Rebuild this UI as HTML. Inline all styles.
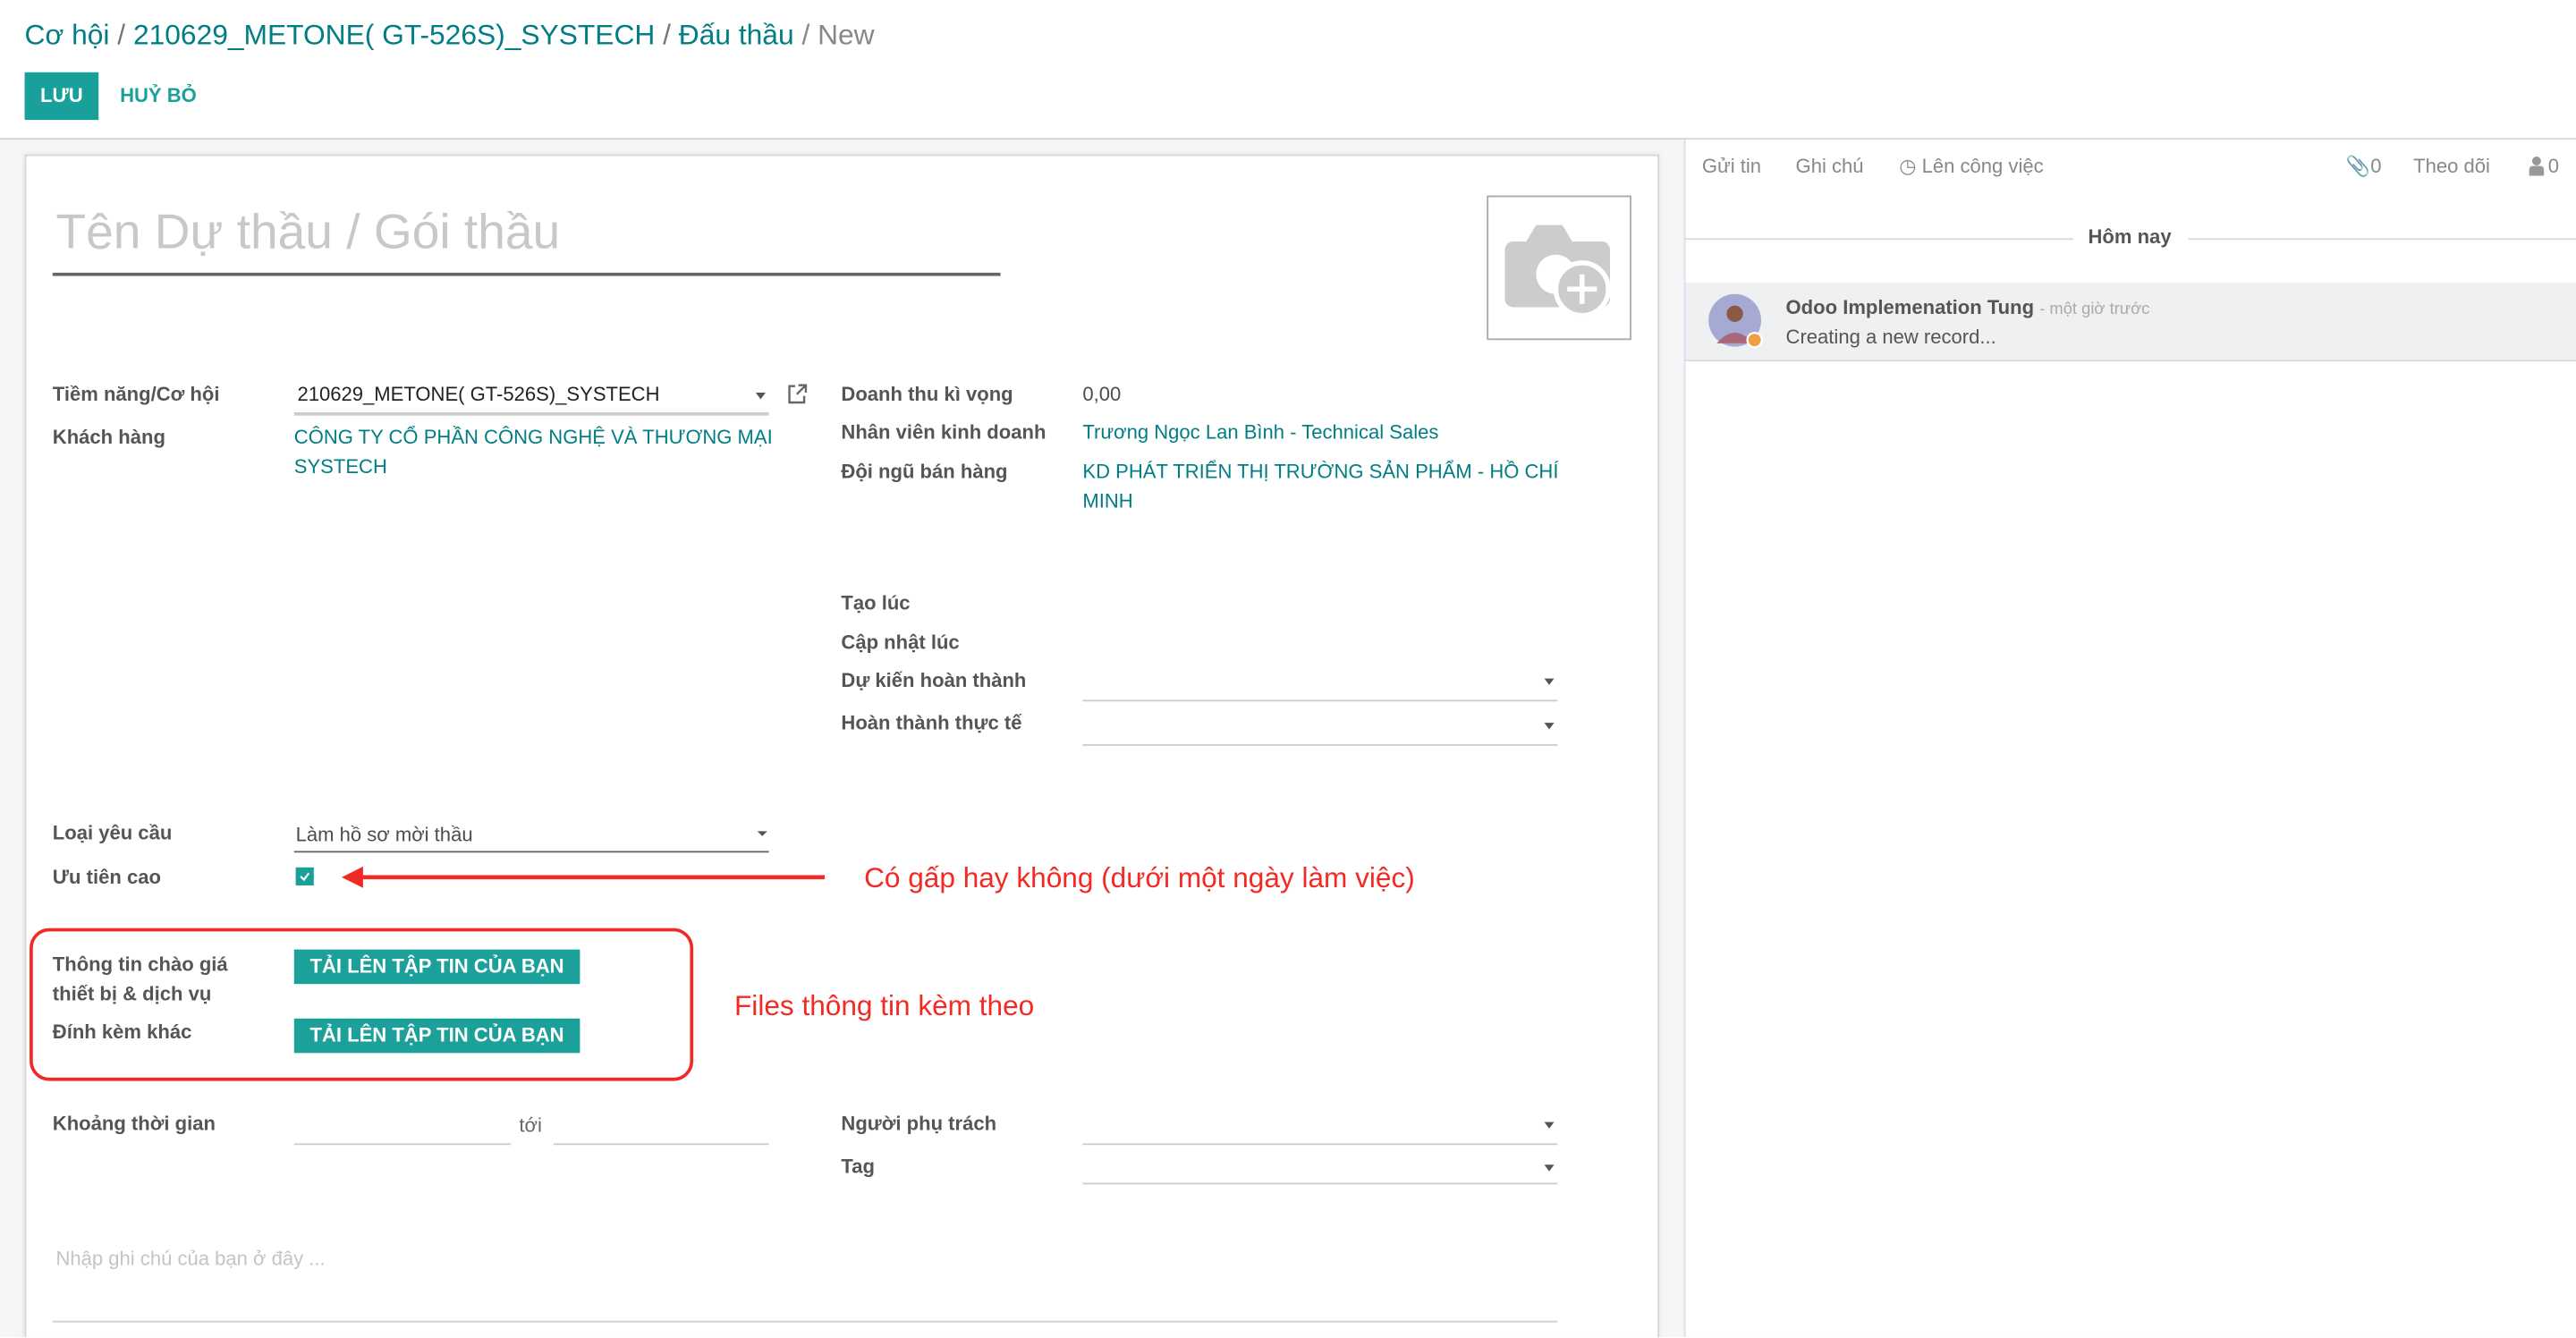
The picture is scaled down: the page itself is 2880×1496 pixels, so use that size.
<!DOCTYPE html>
<html><head><meta charset="utf-8">
<style>
html,body{margin:0;padding:0;width:2880px;height:1496px;overflow:hidden;background:#fff}
#w{position:absolute;left:0;top:0;width:1568px;height:814px;transform:scale(1.836735);transform-origin:0 0;font-family:"Liberation Sans",sans-serif;font-size:12px;color:#4c4c4c;overflow:hidden}
.a{position:absolute;white-space:nowrap}
.l{font-weight:bold;color:#555;font-size:12px}
.t{color:#017e84}
.u{position:absolute;height:1px;background:#ccc}
.c{position:absolute;width:0;height:0;border-left:3.5px solid transparent;border-right:3.5px solid transparent;border-top:4px solid #555}
.btn{position:absolute;background:#1ba199;color:#fff;font-weight:bold;font-size:12px;text-align:center;line-height:20px}
</style></head><body><div id="w">
<div class="a" style="left:15px;top:11px;font-size:17.3px;color:#017e84">Cơ hội <span style="color:#777">/</span> 210629_METONE( GT-526S)_SYSTECH <span style="color:#777">/</span> Đấu thầu <span style="color:#888">/ New</span></div>
<div class="btn" style="left:15px;top:44px;width:45px;height:29px;line-height:29px;background:#1aa09a">LƯU</div>
<div class="a" style="left:73px;top:51px;color:#1aa09a;font-weight:bold;font-size:12px">HUỶ BỎ</div>
<div style="position:absolute;left:0;top:84px;width:1568px;height:730px;background:#f6f6f6;border-top:1px solid #d4d4d4"></div>
<div style="position:absolute;left:15px;top:94px;width:993px;height:722px;background:#fff;border:1px solid #d3d6db;border-bottom:none;box-shadow:0 0 4px rgba(0,0,0,.08)"></div>
<div style="position:absolute;left:1025px;top:85px;width:543px;height:729px;background:#fff;border-left:1px solid #dde"></div>

<div class="a" style="left:34px;top:125px;font-size:30px;color:#c8c8c8">Tên Dự thầu / Gói thầu</div>
<div class="u" style="left:32px;top:166px;width:577px;height:1.5px;background:#666"></div>
<div style="position:absolute;left:905px;top:119px;width:86px;height:86px;border:1px solid #aaa"></div>
<svg class="a" style="left:914px;top:132px" width="70" height="60" viewBox="0 0 70 60"><path d="M15 15l6-10h16l6 10z" fill="#ccc"/><rect x="2" y="15" width="64" height="40" rx="5" fill="#ccc"/><circle cx="33" cy="35" r="12" fill="#fff"/><circle cx="49" cy="44" r="16" fill="#ccc" stroke="#fff" stroke-width="3"/><path d="M49 35v18M40 44h18" stroke="#fff" stroke-width="3"/></svg>

<div class="a l" style="left:32px;top:233px">Tiềm năng/Cơ hội</div>
<div class="a" style="left:181px;top:233px;color:#222">210629_METONE( GT-526S)_SYSTECH</div>
<div class="c" style="left:460px;top:239px"></div>
<div class="u" style="left:179px;top:251px;width:289px;background:#ccc;height:1.5px"></div>
<svg class="a" style="left:479px;top:233px" width="13" height="13" viewBox="0 0 13 13"><path d="M5 2H1.5v10h9V8" fill="none" stroke="#666" stroke-width="1.3"/><path d="M7 1.5h4.5V6M11.5 1.5 6 7" fill="none" stroke="#666" stroke-width="1.3"/></svg>
<div class="a l" style="left:32px;top:259px">Khách hàng</div>
<div class="a t" style="left:179px;top:259px">CÔNG TY CỔ PHẦN CÔNG NGHỆ VÀ THƯƠNG MẠI</div>
<div class="a t" style="left:179px;top:277px">SYSTECH</div>

<div class="a l" style="left:512px;top:233px">Doanh thu kì vọng</div>
<div class="a" style="left:659px;top:233px">0,00</div>
<div class="a l" style="left:512px;top:256px">Nhân viên kinh doanh</div>
<div class="a t" style="left:659px;top:256px">Trương Ngọc Lan Bình - Technical Sales</div>
<div class="a l" style="left:512px;top:280px">Đội ngũ bán hàng</div>
<div class="a t" style="left:659px;top:280px">KD PHÁT TRIỂN THỊ TRƯỜNG SẢN PHẨM - HỒ CHÍ</div>
<div class="a t" style="left:659px;top:298px">MINH</div>
<div class="a l" style="left:512px;top:360px">Tạo lúc</div>
<div class="a l" style="left:512px;top:384px">Cập nhật lúc</div>
<div class="a l" style="left:512px;top:407px">Dự kiến hoàn thành</div>
<div class="c" style="left:940px;top:413px"></div>
<div class="u" style="left:659px;top:426px;width:289px"></div>
<div class="a l" style="left:512px;top:433px">Hoàn thành thực tế</div>
<div class="c" style="left:940px;top:440px"></div>
<div class="u" style="left:659px;top:453px;width:289px"></div>

<div class="a l" style="left:32px;top:500px">Loại yêu cầu</div>
<div class="a" style="left:180px;top:501px">Làm hồ sơ mời thầu</div>
<div class="c" style="left:461px;top:506px;border-top-width:3px;border-left-width:3px;border-right-width:3px"></div>
<div class="u" style="left:179px;top:518px;width:289px;background:#666;height:1.3px"></div>
<div class="a l" style="left:32px;top:527px">Ưu tiên cao</div>
<div style="position:absolute;left:180px;top:528px;width:11px;height:11px;background:#1aa09a"></div>
<svg class="a" style="left:180px;top:528px" width="11" height="11"><path d="M3 5.5l2 2 3-4" fill="none" stroke="#fff" stroke-width="1.2"/></svg>
<svg class="a" style="left:205px;top:526px" width="300" height="16"><path d="M16 8H297" stroke="#f32a23" stroke-width="2.5"/><path d="M3 8 16 1.5V14.5z" fill="#f32a23"/></svg>
<div class="a" style="left:526px;top:524px;font-size:17.2px;color:#f32a23">Có gấp hay không (dưới một ngày làm việc)</div>

<div style="position:absolute;left:18px;top:565px;width:400px;height:89px;border:2.5px solid #f32a23;border-radius:12px"></div>
<div class="a l" style="left:32px;top:580px">Thông tin chào giá</div>
<div class="a l" style="left:32px;top:598px">thiết bị &amp; dịch vụ</div>
<div class="a l" style="left:32px;top:621px">Đính kèm khác</div>
<div class="btn" style="left:179px;top:578px;width:174px;height:21px;line-height:21px">TẢI LÊN TẬP TIN CỦA BẠN</div>
<div class="btn" style="left:179px;top:620px;width:174px;height:21px;line-height:21px">TẢI LÊN TẬP TIN CỦA BẠN</div>
<div class="a" style="left:447px;top:602px;font-size:17.2px;color:#f32a23">Files thông tin kèm theo</div>

<div class="a l" style="left:32px;top:677px">Khoảng thời gian</div>
<div class="u" style="left:179px;top:696px;width:132px"></div>
<div class="a" style="left:316px;top:678px;color:#666">tới</div>
<div class="u" style="left:337px;top:696px;width:131px"></div>
<div class="a l" style="left:512px;top:677px">Người phụ trách</div>
<div class="c" style="left:940px;top:683px"></div>
<div class="u" style="left:659px;top:696px;width:289px"></div>
<div class="a l" style="left:512px;top:703px">Tag</div>
<div class="c" style="left:940px;top:709px"></div>
<div class="u" style="left:659px;top:720px;width:289px"></div>
<div class="a" style="left:34px;top:759px;color:#c4c4c4">Nhập ghi chú của bạn ở đây ...</div>
<div class="u" style="left:32px;top:804px;width:916px"></div>

<div class="a" style="left:1036px;top:94px;color:#888">Gửi tin</div>
<div class="a" style="left:1093px;top:94px;color:#888">Ghi chú</div>
<div class="a" style="left:1156px;top:94px;color:#888">&#9719; Lên công việc</div>
<div class="a" style="left:1428px;top:94px;color:#888">&#128206;0</div>
<div class="a" style="left:1469px;top:94px;color:#888">Theo dõi</div>
<svg class="a" style="left:1539px;top:95px" width="10" height="12"><circle cx="5" cy="3" r="2.7" fill="#999"/><path d="M0.5 12V8.5Q0.5 6 3 6h4q2.5 0 2.5 2.5V12z" fill="#999"/></svg>
<div class="a" style="left:1551px;top:94px;color:#888">0</div>
<div class="u" style="left:1025px;top:145px;width:237px;background:#d8dadd"></div>
<div class="u" style="left:1332px;top:145px;width:236px;background:#d8dadd"></div>
<div class="a" style="left:1271px;top:137px;font-weight:bold;color:#555;font-size:12px">Hôm nay</div>
<div style="position:absolute;left:1026px;top:172px;width:542px;height:47px;background:#eef0f2;border-bottom:1px solid #d8dadd"></div>
<svg class="a" style="left:1038px;top:178px" width="38" height="38"><circle cx="18" cy="17" r="16" fill="#a6aad3"/><circle cx="18" cy="13" r="5" fill="#8a5a44"/><path d="M7 31q11-13 22 0" fill="#a8687a"/><circle cx="30" cy="29" r="5" fill="#fff"/><circle cx="30" cy="29" r="3.8" fill="#f0a040"/></svg>
<div class="a" style="left:1087px;top:180px;font-weight:bold;color:#555;font-size:12px">Odoo Implemenation Tung <span style="font-weight:normal;color:#aaa;font-size:10px">- một giờ trước</span></div>
<div class="a" style="left:1087px;top:198px;color:#555">Creating a new record...</div>
</div></body></html>
